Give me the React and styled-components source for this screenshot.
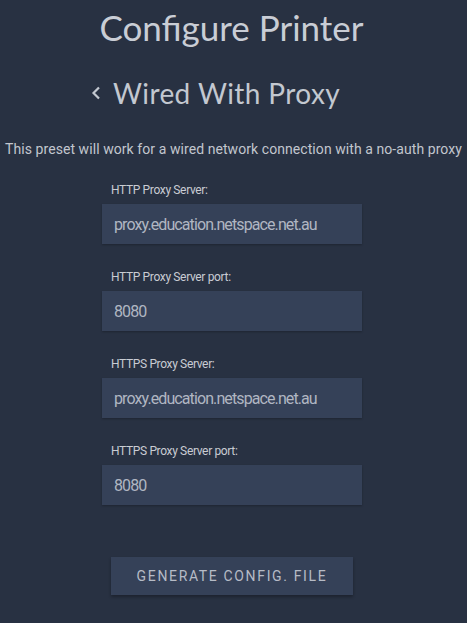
import React from "react";
import styled, { createGlobalStyle } from "styled-components";

const Global = createGlobalStyle`
  html, body { margin: 0; padding: 0; background: #283142; }
  body { font-family: Roboto, "Liberation Sans", sans-serif; }
  * { box-sizing: border-box; }
`;

const Page = styled.div`
  min-height: 623px;
  background: #283142;
  display: flex;
  flex-direction: column;
  padding-top: 6px;
`;

const Title = styled.h1`
  margin: 0;
  font-family: Lato, "Noto Sans", sans-serif;
  font-weight: 400;
  font-size: 35px;
  line-height: 42px;
  color: #c9cdd5;
  text-align: center;
  padding-right: 4px;
`;

const SubHeader = styled.div`
  display: flex;
  align-items: center;
  gap: 12px;
  margin-top: 28px;
  padding-left: 91px;
`;

const BackChevron = styled.svg`
  width: 10px;
  height: 14px;
  flex: none;
`;

const Subtitle = styled.h2`
  margin: 0;
  font-family: Lato, "Noto Sans", sans-serif;
  font-weight: 400;
  font-size: 28px;
  line-height: 34px;
  letter-spacing: 0.4px;
  color: #c3c8d0;
`;

const Description = styled.p`
  margin: 30px 0 0;
  font-size: 14px;
  line-height: 18px;
  letter-spacing: 0.07px;
  color: #c2c6ce;
  text-align: center;
  white-space: nowrap;
`;

const Form = styled.div`
  display: flex;
  flex-direction: column;
  gap: 26px;
  margin-top: 25px;
  padding-left: 102px;
`;

const Field = styled.div`
  display: flex;
  flex-direction: column;
`;

const Label = styled.label`
  font-size: 12px;
  line-height: 15px;
  letter-spacing: -0.35px;
  color: #c9ccd3;
  padding-left: 9px;
  margin-bottom: 6px;
`;

const Input = styled.div`
  width: 260px;
  height: 40px;
  background: #354158;
  box-shadow: 0 1px 2px rgba(0, 0, 0, 0.25);
  display: flex;
  align-items: center;
  padding-left: 12px;
  font-size: 16px;
  letter-spacing: -0.9px;
  color: #b0b6c2;
`;

const ButtonRow = styled.div`
  display: flex;
  padding-left: 111px;
  margin-top: 52px;
`;

const Button = styled.button`
  width: 242px;
  height: 38px;
  border: none;
  background: #354158;
  box-shadow: 0 2px 3px rgba(0, 0, 0, 0.3);
  color: #b6bbc6;
  font-family: Roboto, "Liberation Sans", sans-serif;
  font-size: 14px;
  letter-spacing: 1.65px;
  text-transform: uppercase;
  cursor: pointer;
`;

const fields = [
  { label: "HTTP Proxy Server:", value: "proxy.education.netspace.net.au" },
  { label: "HTTP Proxy Server port:", value: "8080" },
  { label: "HTTPS Proxy Server:", value: "proxy.education.netspace.net.au" },
  { label: "HTTPS Proxy Server port:", value: "8080" },
];

export default function App() {
  return (
    <>
      <Global />
      <Page>
        <Title>Configure Printer</Title>
        <SubHeader>
          <BackChevron viewBox="0 0 10 14">
            <path d="M8 1.5 L2.5 7 L8 12.5" fill="none" stroke="#c3c8d0" strokeWidth="2.2" />
          </BackChevron>
          <Subtitle>Wired With Proxy</Subtitle>
        </SubHeader>
        <Description>
          This preset will work for a wired network connection with a no-auth proxy
        </Description>
        <Form>
          {fields.map((f) => (
            <Field key={f.label}>
              <Label>{f.label}</Label>
              <Input>{f.value}</Input>
            </Field>
          ))}
        </Form>
        <ButtonRow>
          <Button>Generate Config. File</Button>
        </ButtonRow>
      </Page>
    </>
  );
}
